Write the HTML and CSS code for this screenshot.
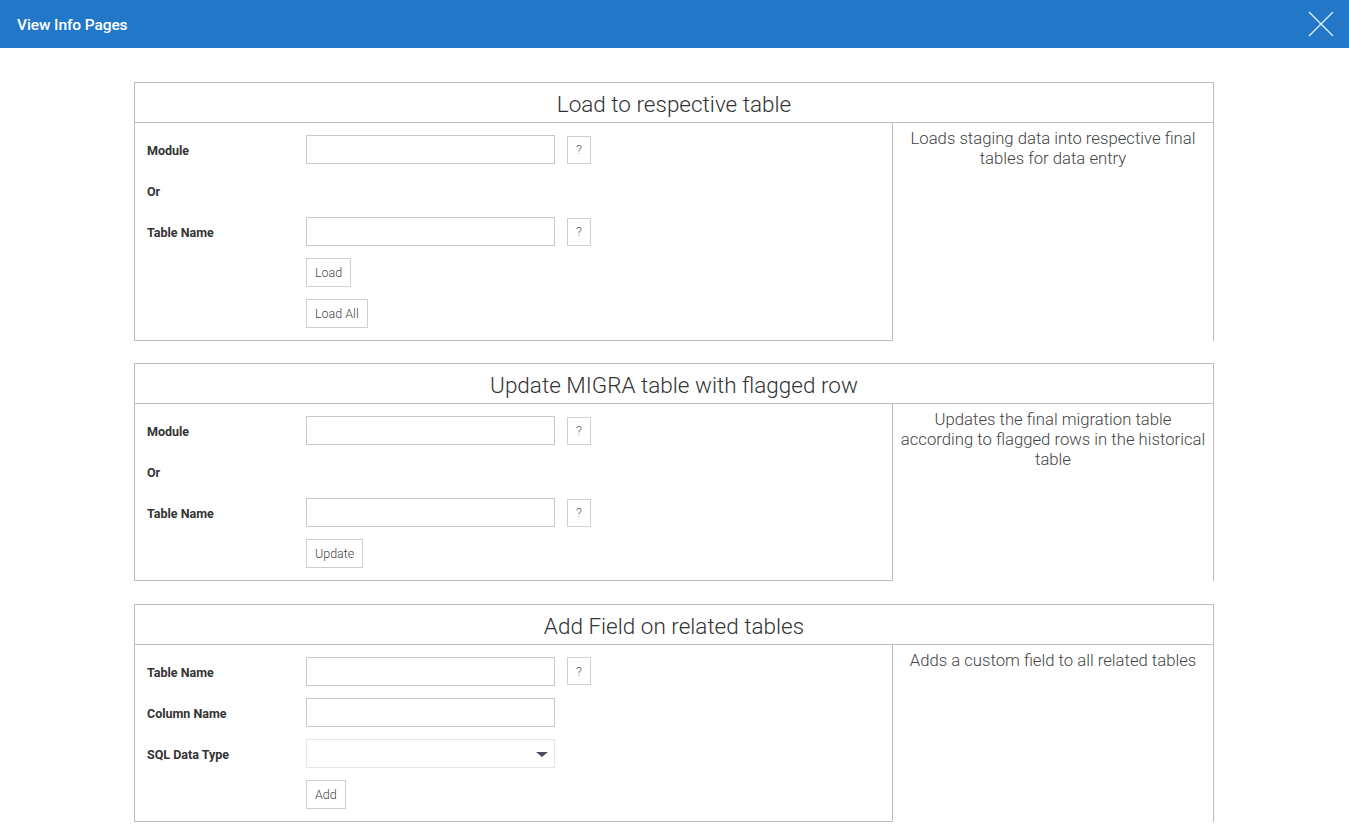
FILE: index.html
```html
<!DOCTYPE html>
<html>
<head>
<meta charset="utf-8">
<link rel="stylesheet" href="styles.css">
</head>
<body>
<header class="topbar">
  <span class="topbar-title">View Info Pages</span>
  <svg class="close" width="26" height="26" viewBox="0 0 26 26"><path d="M1 1 L25 25 M25 1 L1 25" stroke="#e8f0fa" stroke-width="1.3" fill="none"/></svg>
</header>
<main class="content">
  <section class="panel">
    <div class="panel-title">Load to respective table</div>
    <div class="panel-body">
      <div class="form">
        <label class="lbl">Module</label>
        <div class="field"><input class="inp" type="text"><button class="help">?</button></div>
        <label class="lbl">Or</label>
        <div class="field"></div>
        <label class="lbl">Table Name</label>
        <div class="field"><input class="inp" type="text"><button class="help">?</button></div>
        <span></span>
        <div class="field"><button class="btn">Load</button></div>
        <span></span>
        <div class="field"><button class="btn">Load All</button></div>
      </div>
      <div class="desc">Loads staging data into respective final tables for data entry</div>
    </div>
  </section>

  <section class="panel">
    <div class="panel-title">Update MIGRA table with flagged row</div>
    <div class="panel-body">
      <div class="form">
        <label class="lbl">Module</label>
        <div class="field"><input class="inp" type="text"><button class="help">?</button></div>
        <label class="lbl">Or</label>
        <div class="field"></div>
        <label class="lbl">Table Name</label>
        <div class="field"><input class="inp" type="text"><button class="help">?</button></div>
        <span></span>
        <div class="field"><button class="btn">Update</button></div>
      </div>
      <div class="desc">Updates the final migration table according to flagged rows in the historical table</div>
    </div>
  </section>

  <section class="panel">
    <div class="panel-title">Add Field on related tables</div>
    <div class="panel-body">
      <div class="form">
        <label class="lbl">Table Name</label>
        <div class="field"><input class="inp" type="text"><button class="help">?</button></div>
        <label class="lbl">Column Name</label>
        <div class="field"><input class="inp" type="text"></div>
        <label class="lbl">SQL Data Type</label>
        <div class="field"><div class="select"><span class="caret"></span></div></div>
        <span></span>
        <div class="field"><button class="btn">Add</button></div>
      </div>
      <div class="desc">Adds a custom field to all related tables</div>
    </div>
  </section>
</main>
</body>
</html>
```
FILE: styles.css
```css
* { box-sizing: border-box; }
html, body { margin: 0; padding: 0; background: #fff; }
body { font-family: Roboto, "Liberation Sans", sans-serif; color: #333; }

.topbar {
  height: 48px;
  background: #2277c8;
  display: flex;
  align-items: center;
  justify-content: space-between;
  padding: 2px 15px 0 17px;
}
.topbar-title { color: #fff; font-size: 15.5px; font-weight: 500; letter-spacing: -0.1px; }
.close { display: block; margin-top: -2px; }

.content {
  width: 1080px;
  margin: 34px 0 0 134px;
  display: flex;
  flex-direction: column;
  gap: 22.4px;
}

.panel {
  border-top: 1px solid #bdbdbd;
  border-left: 1px solid #bdbdbd;
  border-right: 1px solid #bdbdbd;
}
.panel-title {
  height: 40px;
  border-bottom: 1px solid #bdbdbd;
  text-align: center;
  font-size: 22.5px;
  font-weight: 300;
  line-height: 42px;
  color: #333;
}
.panel-body {
  display: grid;
  grid-template-columns: 758px 1fr;
}
.form {
  border-right: 1px solid #bdbdbd;
  border-bottom: 1px solid #bdbdbd;
  padding: 12px 0 12px 12px;
  display: grid;
  grid-template-columns: 159px 1fr;
  row-gap: 12px;
  align-items: center;
}
.lbl { font-size: 12.5px; font-weight: 700; color: #333; padding-top: 2px; }
.field { display: flex; align-items: center; height: 29px; }
.inp {
  width: 249px;
  height: 29px;
  border: 1px solid #c8c8c8;
  margin: 0;
  padding: 0 6px;
  outline: none;
  background: #fff;
}
.help {
  margin-left: 12px;
  width: 24px;
  height: 28px;
  border: 1px solid #cfcfcf;
  background: #fff;
  color: #666;
  font-family: Roboto, "Liberation Sans", sans-serif;
  font-size: 13px;
  font-weight: 300;
  padding: 0;
}
.btn {
  height: 29px;
  border: 1px solid #cfcfcf;
  background: #fff;
  color: #444;
  font-family: Roboto, "Liberation Sans", sans-serif;
  font-size: 12.5px;
  font-weight: 300;
  padding: 0 8px;
  margin: 0;
}
.select {
  width: 249px;
  height: 29px;
  border: 1px solid #e6e6e6;
  position: relative;
  background: #fff;
}
.caret {
  position: absolute;
  right: 6px;
  top: 12px;
  width: 0; height: 0;
  border-left: 6px solid transparent;
  border-right: 6px solid transparent;
  border-top: 5px solid #4d4d5c;
}
.desc {
  padding: 6px 7px 0;
  text-align: center;
  font-size: 16.7px;
  font-weight: 300;
  line-height: 20px;
  color: #444;
}
```
